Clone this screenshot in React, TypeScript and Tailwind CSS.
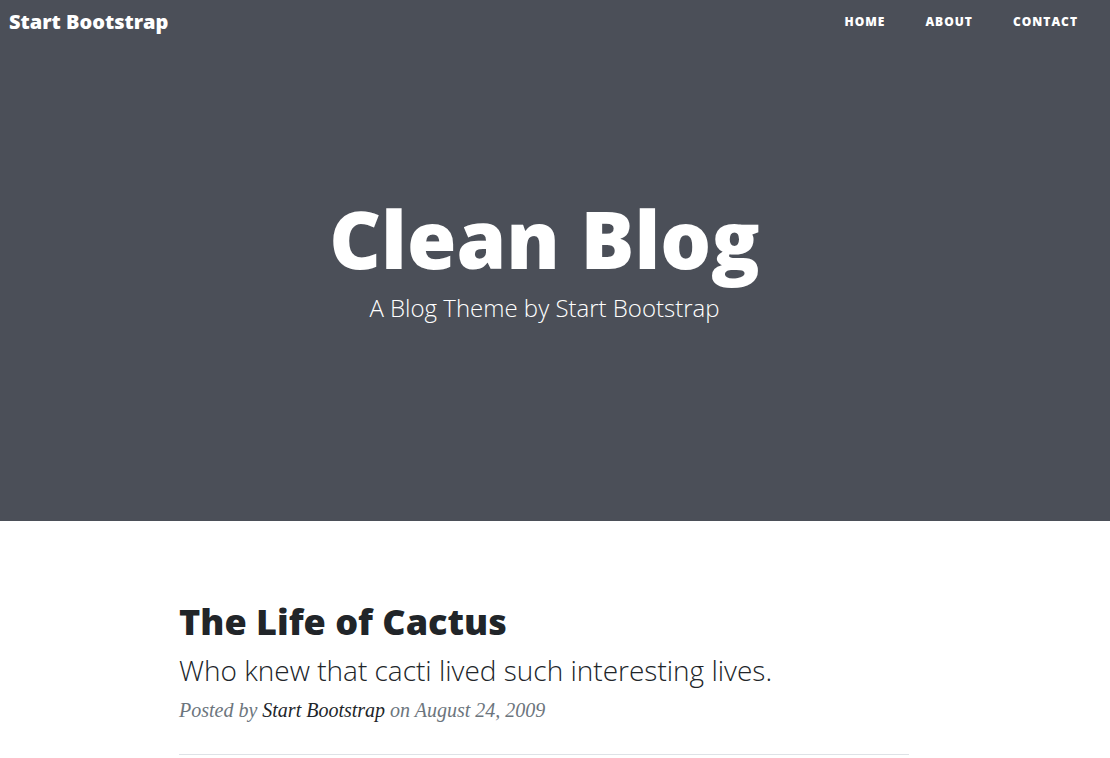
const OPEN = "font-['Open_Sans',sans-serif]";

function NavBar() {
  return (
    <nav className={`flex items-center justify-between h-[44px] pl-[9px] pr-[12px] ${OPEN}`}>
      <a href="#" className="text-[20px] font-extrabold text-white leading-none">
        Start Bootstrap
      </a>
      <ul className="flex items-center">
        {["Home", "About", "Contact"].map((l) => (
          <li key={l}>
            <a
              href="#"
              className="block px-5 text-[12px] font-extrabold uppercase tracking-[1px] text-white leading-none"
            >
              {l}
            </a>
          </li>
        ))}
      </ul>
    </nav>
  );
}

function Masthead() {
  return (
    <header className={`bg-[#4b4f58] text-white ${OPEN}`}>
      <NavBar />
      <div className="flex flex-col items-center pt-[146px] pb-[200px] pr-[21px]">
        <h1 className="text-[80px] font-extrabold leading-[1.2]">Clean Blog</h1>
        <span className="mt-[9px] text-[24px] font-light leading-[1.1]">
          A Blog Theme by Start Bootstrap
        </span>
      </div>
    </header>
  );
}

function PostPreview() {
  return (
    <div className="pr-[22px]">
      <div className="mx-auto w-[730px] pt-[79px]">
        <a href="#" className={`block text-[#212529] ${OPEN}`}>
          <h2 className="text-[36px] font-extrabold leading-[1.2] mb-[10px]">The Life of Cactus</h2>
          <h3 className="text-[28px] font-light leading-[1.2] mb-[10px]">
            Who knew that cacti lived such interesting lives.
          </h3>
        </a>
        <p className="font-['Liberation_Serif',serif] italic text-[20px] leading-[26px] text-[#6c757d]">
          Posted by{" "}
          <a href="#" className="text-[#212529]">
            Start Bootstrap
          </a>{" "}
          on August 24, 2009
        </p>
        <hr className="mt-[31px] border-t border-[#dee2e6]" />
      </div>
    </div>
  );
}

export default function App() {
  return (
    <div className="min-h-screen bg-white">
      <Masthead />
      <PostPreview />
    </div>
  );
}
